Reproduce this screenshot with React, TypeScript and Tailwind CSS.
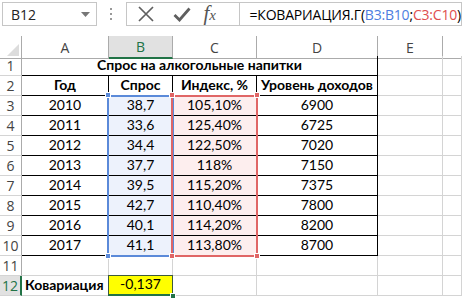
import React from "react";

const GRID = "grid grid-cols-[22px_87px_64px_84px_121px_65px_19px]";

const data: [string, string, string, string][] = [
  ["2010", "38,7", "105,10%", "6900"],
  ["2011", "33,6", "125,40%", "6725"],
  ["2012", "34,4", "122,50%", "7020"],
  ["2013", "37,7", "118%", "7150"],
  ["2014", "39,5", "115,20%", "7375"],
  ["2015", "42,7", "110,40%", "7800"],
  ["2016", "40,1", "114,20%", "8200"],
  ["2017", "41,1", "113,80%", "8700"],
];

const cellFont = "font-['Lato','Liberation_Sans',sans-serif] text-[14px] text-black";

function RowHead({ n, active }: { n: number; active?: boolean }) {
  return (
    <div
      className={
        "h-[20px] flex items-center justify-center border-b border-[#d4d4d4] font-['Open_Sans',sans-serif] text-[14px] " +
        (active
          ? "bg-[#e1e1e1] text-[#217346] border-r-2 border-r-[#217346]"
          : "bg-white text-[#444] border-r border-r-[#ababab]")
      }
    >
      {n}
    </div>
  );
}

function Cell({
  children,
  black,
  bold,
  align = "center",
  className = "",
}: {
  children?: React.ReactNode;
  black?: boolean;
  bold?: boolean;
  align?: "center" | "left";
  className?: string;
}) {
  return (
    <div
      className={
        "h-[20px] flex items-end pb-[1px] leading-[18px] border-r border-b whitespace-nowrap " +
        (black ? "border-black " : "border-[#d4d4d4] ") +
        (align === "center" ? "justify-center " : "justify-start pl-[3px] ") +
        (bold ? "font-bold " : "") +
        cellFont +
        " " +
        className
      }
    >
      {children}
    </div>
  );
}

function Blank() {
  return <div className="h-[20px] border-r border-b border-[#d4d4d4]" />;
}

export default function App() {
  return (
    <div className="w-[462px] h-[298px] bg-white overflow-hidden relative">
      {/* Formula bar */}
      <div className="h-[36px] flex items-start pt-[2px] pl-[2px]">
        <div className="w-[101px] h-[24px] border border-[#c6c6c6] flex items-center pl-[8px] pr-[6px] justify-between font-['Open_Sans',sans-serif] text-[14px] text-[#222]">
          <span>B12</span>
          <svg width="9" height="5" viewBox="0 0 9 5">
            <path d="M0 0 L9 0 L4.5 5 Z" fill="#777" />
          </svg>
        </div>
        <div className="w-[31px] h-[24px] flex flex-col items-center justify-center gap-[3px]">
          <span className="w-[2px] h-[2px] bg-[#999]" />
          <span className="w-[2px] h-[2px] bg-[#999]" />
          <span className="w-[2px] h-[2px] bg-[#999]" />
        </div>
        <div className="flex-1 h-[24px] border border-[#c6c6c6] flex">
          <div className="w-[113px] flex items-center border-r border-[#c6c6c6]">
            <svg className="ml-[11px]" width="16" height="16" viewBox="0 0 16 16">
              <path d="M1 1 L15 15 M15 1 L1 15" stroke="#5f5f5f" strokeWidth="1.7" fill="none" />
            </svg>
            <svg className="ml-[19px]" width="18" height="15" viewBox="0 0 18 15">
              <path d="M1.5 8 L6.5 13 L16.5 1.5" stroke="#5f5f5f" strokeWidth="2.8" fill="none" />
            </svg>
            <span className="ml-[13px] font-['Liberation_Serif',serif] italic text-[21px] text-[#555] leading-none mt-[-2px]">
              f<span className="text-[15px]">x</span>
            </span>
          </div>
          <div className="flex-1 flex items-center pl-[10px] font-['Open_Sans',sans-serif] text-[14px] text-black whitespace-nowrap tracking-[-0.2px]">
            <span>=КОВАРИАЦИЯ.Г(</span>
            <span className="text-[#4e7de0]">B3:B10</span>
            <span>;</span>
            <span className="text-[#e04e4e]">C3:C10</span>
            <span>)</span>
          </div>
        </div>
      </div>

      {/* Sheet */}
      <div className="relative">
        {/* column headers */}
        <div className={GRID + " h-[20px] font-['Open_Sans',sans-serif] text-[14px] text-[#444]"}>
          <div className="border-r border-b border-[#ababab] bg-white relative">
            <svg className="absolute right-[2px] bottom-[2px]" width="12" height="12" viewBox="0 0 12 12">
              <path d="M12 0 L12 12 L0 12 Z" fill="#dcdcdc" />
            </svg>
          </div>
          <div className="flex items-center justify-center border-r border-b border-[#ababab]">A</div>
          <div className="flex items-center justify-center border-r border-[#ababab] border-b-2 border-b-[#217346] bg-[#e1e1e1] text-[#217346]">B</div>
          <div className="flex items-center justify-center border-r border-b border-[#ababab]">C</div>
          <div className="flex items-center justify-center border-r border-b border-[#ababab]">D</div>
          <div className="flex items-center justify-center border-r border-b border-[#ababab]">E</div>
          <div className="border-b border-[#ababab]" />
        </div>

        {/* row 1 */}
        <div className={GRID}>
          <RowHead n={1} />
          <div className="col-span-4 h-[20px] flex items-end justify-center pb-[1px] leading-[18px] border-r border-b border-black font-bold whitespace-nowrap font-['Lato','Liberation_Sans',sans-serif] text-[14px] text-black">
            Спрос на алкогольные напитки
          </div>
          <Blank />
          <Blank />
        </div>

        {/* row 2 */}
        <div className={GRID}>
          <RowHead n={2} />
          <Cell black bold>Год</Cell>
          <Cell black bold>Спрос</Cell>
          <Cell black bold>Индекс, %</Cell>
          <Cell black bold>Уровень доходов</Cell>
          <Blank />
          <Blank />
        </div>

        {data.map((r, i) => (
          <div key={i} className={GRID}>
            <RowHead n={i + 3} />
            <Cell black>{r[0]}</Cell>
            <Cell black className="bg-[#edf2fc]">{r[1]}</Cell>
            <Cell black className="bg-[#fdeeee]">{r[2]}</Cell>
            <Cell black>{r[3]}</Cell>
            <Blank />
            <Blank />
          </div>
        ))}

        {/* row 11 */}
        <div className={GRID}>
          <RowHead n={11} />
          <Blank />
          <Blank />
          <Blank />
          <Blank />
          <Blank />
          <Blank />
        </div>

        {/* row 12 */}
        <div className={GRID}>
          <RowHead n={12} active />
          <Cell bold align="left">Ковариация</Cell>
          <Cell className="bg-[#ffff00] !border-[#3d5a3d] border-l border-t !border-b-2 !border-b-[#217346] ml-[-1px] mt-[-1px] h-[21px]">-0,137</Cell>
          <Blank />
          <Blank />
          <Blank />
          <Blank />
        </div>

        {/* range overlays */}
        <div className="absolute left-[107px] top-[59px] w-[67px] h-[162px] border-2 border-[#5b8ad9] pointer-events-none" />
        <div className="absolute left-[171px] top-[59px] w-[87px] h-[162px] border-2 border-[#e06666] pointer-events-none" />
        <div className="absolute left-[105px] top-[56px] w-[6px] h-[6px] bg-[#5b8ad9] border border-white" />
        <div className="absolute left-[105px] top-[217px] w-[6px] h-[6px] bg-[#5b8ad9] border border-white" />
        <div className="absolute left-[169px] top-[56px] w-[6px] h-[6px] bg-[#e06666] border border-white" />
        <div className="absolute left-[169px] top-[217px] w-[6px] h-[6px] bg-[#e06666] border border-white" />
        <div className="absolute left-[254px] top-[56px] w-[6px] h-[6px] bg-[#e06666] border border-white" />
        <div className="absolute left-[254px] top-[217px] w-[6px] h-[6px] bg-[#e06666] border border-white" />
        <div className="absolute left-[170px] top-[257px] w-[6px] h-[6px] bg-[#217346] border border-white" />
      </div>
    </div>
  );
}
